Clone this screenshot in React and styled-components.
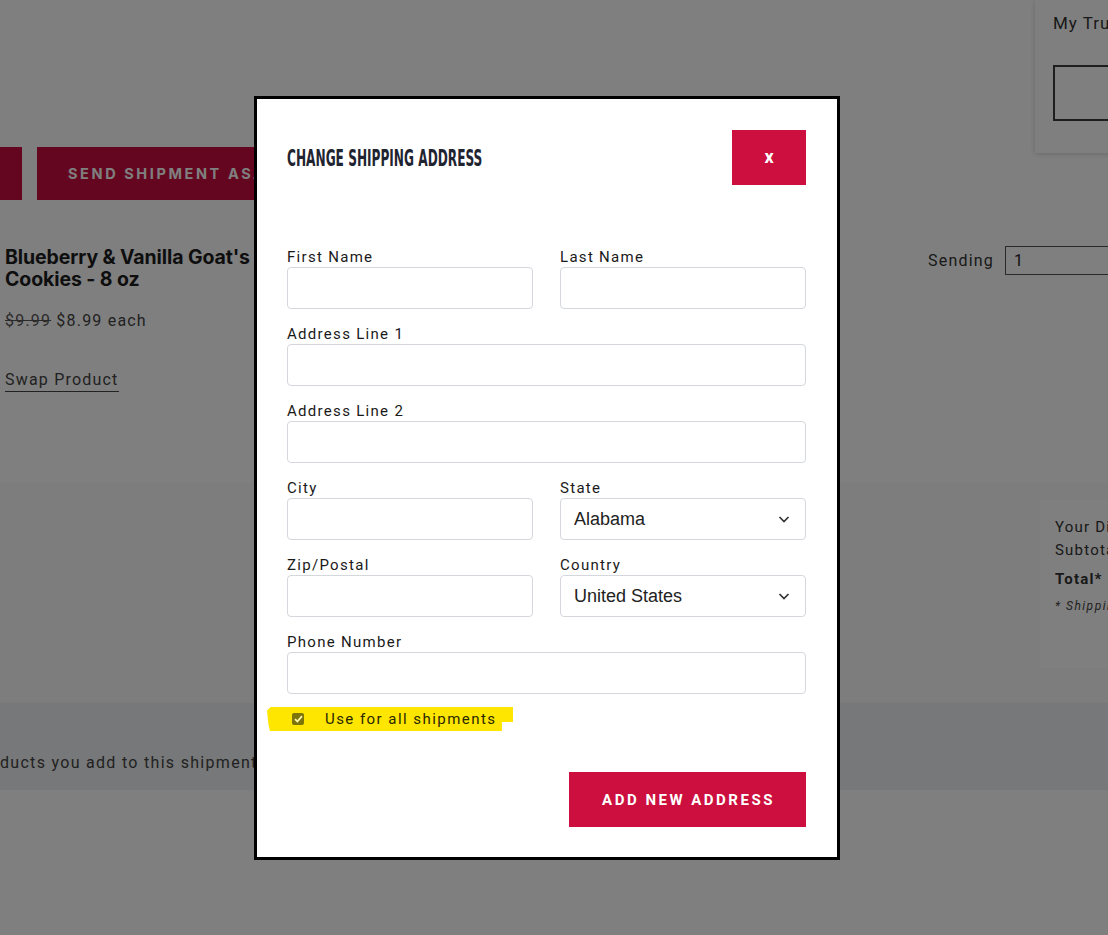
import React from "react";
import styled, { createGlobalStyle } from "styled-components";

const GlobalStyle = createGlobalStyle`
  html, body {
    margin: 0;
    padding: 0;
  }
  body {
    font-family: Roboto, "Liberation Sans", sans-serif;
    color: #222;
    background: #fff;
    overflow: hidden;
  }
  * {
    box-sizing: border-box;
  }
`;

const Page = styled.div`
  position: relative;
  width: 1108px;
  height: 935px;
  overflow: hidden;
  background: #fff;
`;

/* ---------- page behind the modal ---------- */

const TopArea = styled.div`
  height: 483px;
  display: flex;
  flex-direction: column;
`;

const HeaderRow = styled.div`
  display: flex;
  align-items: flex-start;
  height: 200px;
`;

const ActionRow = styled.div`
  display: flex;
  gap: 15px;
  margin-top: 147px;
  margin-left: -100px;
`;

const RedAction = styled.button`
  height: 53px;
  width: ${(p) => p.$w}px;
  background: #ca0c40;
  border: none;
  color: #fff;
  font-family: Inter, "Liberation Sans", sans-serif;
  font-weight: 700;
  font-size: 14.5px;
  letter-spacing: 2.6px;
  text-align: left;
  padding: 0 0 0 31px;
  white-space: nowrap;
`;

const TruckCard = styled.div`
  margin-left: auto;
  margin-right: -127px;
  width: 200px;
  height: 153px;
  background: #fff;
  box-shadow: 0 1px 6px rgba(0, 0, 0, 0.18);
  padding: 12px 18px;
`;

const TruckTitle = styled.div`
  font-size: 17px;
  letter-spacing: 1px;
  color: #333;
  line-height: 22px;
`;

const TruckBox = styled.div`
  margin-top: 31px;
  height: 56px;
  border: 2px solid #3c3c3c;
`;

const ProductRow = styled.div`
  display: flex;
  justify-content: space-between;
  align-items: flex-start;
  padding-left: 5px;
  margin-top: 46px;
`;

const ProductInfo = styled.div`
  display: flex;
  flex-direction: column;
`;

const ProductName = styled.div`
  font-family: Inter, "Liberation Sans", sans-serif;
  font-weight: 700;
  font-size: 19.5px;
  letter-spacing: -0.1px;
  line-height: 22px;
  color: #1d1d1d;
`;

const Price = styled.div`
  margin-top: 21px;
  font-size: 16px;
  letter-spacing: 1.2px;
  color: #444;
  line-height: 20px;

  s {
    color: #555;
  }
`;

const SwapLink = styled.a`
  align-self: flex-start;
  margin-top: 39px;
  font-size: 16px;
  letter-spacing: 1.2px;
  color: #444;
  line-height: 20px;
  padding-bottom: 1px;
  border-bottom: 1px solid #444;
`;

const SendingField = styled.div`
  display: flex;
  align-items: center;
  gap: 11px;
  margin-right: -50px;
`;

const SendingLabel = styled.span`
  font-size: 16px;
  letter-spacing: 1.2px;
  color: #333;
`;

const SendingInput = styled.div`
  width: 153px;
  height: 29px;
  border: 1px solid #555;
  padding: 4px 8px;
  font-size: 16px;
  color: #222;
`;

const SummaryBand = styled.div`
  height: 220px;
  background: #fafbfd;
  display: flex;
  padding-top: 17px;
`;

const SummaryCard = styled.div`
  margin-left: auto;
  margin-right: -132px;
  width: 200px;
  height: 168px;
  background: #fff;
  padding: 16px 15px;
`;

const SummaryLine = styled.div`
  font-size: 15px;
  letter-spacing: 1.2px;
  line-height: 23px;
  color: #333;
  font-weight: ${(p) => (p.$bold ? 700 : 400)};
  margin-top: ${(p) => (p.$bold ? 6 : 0)}px;
`;

const ShipNote = styled.div`
  margin-top: 8px;
  font-size: 12px;
  font-style: italic;
  letter-spacing: 1.5px;
  color: #444;
`;

const NoticeBand = styled.div`
  height: 87px;
  background: #eef0f2;
  padding-top: 50px;
  font-size: 16px;
  letter-spacing: 1.3px;
  color: #444;
  white-space: nowrap;
`;

/* ---------- modal ---------- */

const Backdrop = styled.div`
  position: absolute;
  inset: 0;
  background: rgba(0, 0, 0, 0.5);
  display: flex;
  align-items: flex-start;
  padding: 96px 0 0 254px;
`;

const Modal = styled.div`
  width: 586px;
  background: #fff;
  border: 3px solid #000;
  padding: 31px 31px 30px 30px;
`;

const ModalHeader = styled.div`
  display: flex;
  justify-content: space-between;
  align-items: center;
`;

const ModalTitle = styled.h2`
  margin: 0;
  font-family: "DejaVu Sans Condensed", "Liberation Sans Narrow", "DejaVu Sans", sans-serif;
  font-weight: 700;
  font-size: 22.5px;
  color: #1f2430;
  white-space: nowrap;
  transform: scaleX(0.6);
  transform-origin: left center;
`;

const CloseButton = styled.button`
  width: 74px;
  height: 55px;
  background: #cc0f3e;
  border: none;
  color: #fff;
  font-family: Roboto, "Liberation Sans", sans-serif;
  font-weight: 700;
  font-size: 18px;
  padding: 0 0 3px;
`;

const Form = styled.div`
  margin-top: 62px;
  display: grid;
  grid-template-columns: 1fr 1fr;
  column-gap: 27px;
  row-gap: 15px;
`;

const Field = styled.label`
  display: flex;
  flex-direction: column;
  grid-column: ${(p) => (p.$full ? "1 / span 2" : "auto")};
`;

const Label = styled.span`
  font-size: 15px;
  letter-spacing: 1.3px;
  line-height: 20px;
  color: #1a1a1a;
`;

const TextInput = styled.input`
  height: 42px;
  border: 1px solid #d4d7dc;
  border-radius: 4px;
  padding: 0 14px;
  font-size: 16px;
  background: #fff;
  outline: none;
`;

const SelectWrap = styled.div`
  position: relative;
  height: 42px;
`;

const Select = styled.select`
  appearance: none;
  width: 100%;
  height: 42px;
  border: 1px solid #d4d7dc;
  border-radius: 4px;
  padding: 0 40px 0 13px;
  font-family: "Liberation Sans", Arial, sans-serif;
  font-size: 18px;
  color: #222;
  background: #fff;
  outline: none;
`;

const Chevron = styled.svg`
  position: absolute;
  right: 16px;
  top: 15px;
  pointer-events: none;
`;

const CheckRow = styled.div`
  margin-top: 13px;
`;

const Highlight = styled.label`
  display: inline-flex;
  align-items: center;
  width: 246px;
  height: 24px;
  margin-left: -20px;
  padding-left: 25px;
  background: #ffe600;
  clip-path: polygon(0 15%, 1.5% 0, 100% 0, 100% 62%, 95.5% 62%, 95.5% 100%, 1.2% 100%, 0.6% 75%);
`;

const CheckBox = styled.span`
  width: 12px;
  height: 12px;
  border-radius: 2px;
  background: #7b750b;
  display: inline-flex;
  align-items: center;
  justify-content: center;
  margin-right: 21px;
`;

const CheckText = styled.span`
  font-size: 15px;
  letter-spacing: 1.45px;
  color: #2a2800;
`;

const Actions = styled.div`
  margin-top: 41px;
  display: flex;
  justify-content: flex-end;
`;

const SubmitButton = styled.button`
  width: 237px;
  height: 55px;
  background: #cc0f3e;
  border: none;
  color: #fff;
  font-family: Roboto, "Liberation Sans", sans-serif;
  font-weight: 700;
  font-size: 15px;
  letter-spacing: 2.5px;
  padding: 0 0 0 2px;
`;

const ChevronIcon = () => (
  <Chevron width="12" height="12" viewBox="0 0 12 12">
    <path d="M1.5 4 L6 8.5 L10.5 4" fill="none" stroke="#333" strokeWidth="1.7" />
  </Chevron>
);

const SelectField = ({ label, value }) => (
  <Field>
    <Label>{label}</Label>
    <SelectWrap>
      <Select defaultValue={value}>
        <option>{value}</option>
      </Select>
      <ChevronIcon />
    </SelectWrap>
  </Field>
);

const InputField = ({ label, full }) => (
  <Field $full={full}>
    <Label>{label}</Label>
    <TextInput type="text" />
  </Field>
);

const App = () => {
  return (
    <Page>
      <GlobalStyle />
      <TopArea>
        <HeaderRow>
          <ActionRow>
            <RedAction $w={122} />
            <RedAction $w={330}>SEND SHIPMENT ASAP</RedAction>
          </ActionRow>
          <TruckCard>
            <TruckTitle>My Truck</TruckTitle>
            <TruckBox />
          </TruckCard>
        </HeaderRow>
        <ProductRow>
          <ProductInfo>
            <ProductName>
              Blueberry &amp; Vanilla Goat's
              <br />
              Cookies - 8 oz
            </ProductName>
            <Price>
              <s>$9.99</s> $8.99 each
            </Price>
            <SwapLink>Swap Product</SwapLink>
          </ProductInfo>
          <SendingField>
            <SendingLabel>Sending</SendingLabel>
            <SendingInput>1</SendingInput>
          </SendingField>
        </ProductRow>
      </TopArea>
      <SummaryBand>
        <SummaryCard>
          <SummaryLine>Your Discount</SummaryLine>
          <SummaryLine>Subtotal</SummaryLine>
          <SummaryLine $bold>Total*</SummaryLine>
          <ShipNote>* Shipping calculated</ShipNote>
        </SummaryCard>
      </SummaryBand>
      <NoticeBand>ducts you add to this shipment will ship together</NoticeBand>

      <Backdrop>
        <Modal>
          <ModalHeader>
            <ModalTitle>CHANGE SHIPPING ADDRESS</ModalTitle>
            <CloseButton>x</CloseButton>
          </ModalHeader>
          <Form>
            <InputField label="First Name" />
            <InputField label="Last Name" />
            <InputField label="Address Line 1" full />
            <InputField label="Address Line 2" full />
            <InputField label="City" />
            <SelectField label="State" value="Alabama" />
            <InputField label="Zip/Postal" />
            <SelectField label="Country" value="United States" />
            <InputField label="Phone Number" full />
          </Form>
          <CheckRow>
            <Highlight>
              <CheckBox>
                <svg width="9" height="8" viewBox="0 0 9 8">
                  <path d="M1 4.2 L3.4 6.5 L8 1.2" fill="none" stroke="#fff6a8" strokeWidth="1.8" />
                </svg>
              </CheckBox>
              <CheckText>Use for all shipments</CheckText>
            </Highlight>
          </CheckRow>
          <Actions>
            <SubmitButton>ADD NEW ADDRESS</SubmitButton>
          </Actions>
        </Modal>
      </Backdrop>
    </Page>
  );
};

export default App;
